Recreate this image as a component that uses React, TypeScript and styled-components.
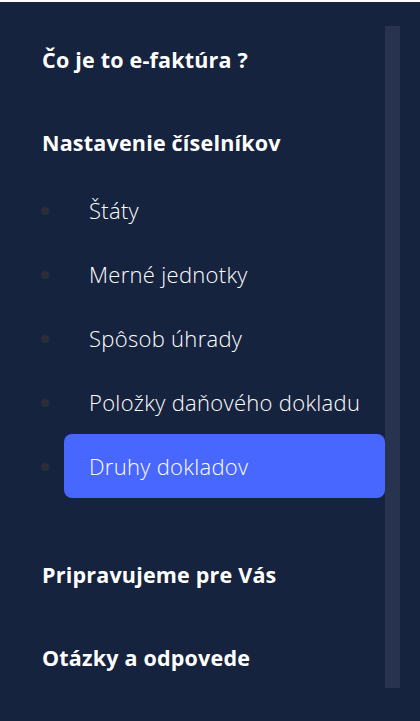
import React from "react";
import styled, { createGlobalStyle } from "styled-components";

const GlobalStyle = createGlobalStyle`
  html, body {
    margin: 0;
    padding: 0;
    background: #ffffff;
  }
  body {
    font-family: "Open Sans", "Noto Sans", sans-serif;
  }
`;

type NavItem = { label: string; active?: boolean };
type NavSection = { title: string; items?: NavItem[] };

const sections: NavSection[] = [
  { title: "Čo je to e-faktúra ?" },
  {
    title: "Nastavenie číselníkov",
    items: [
      { label: "Štáty" },
      { label: "Merné jednotky" },
      { label: "Spôsob úhrady" },
      { label: "Položky daňového dokladu" },
      { label: "Druhy dokladov", active: true },
    ],
  },
  { title: "Pripravujeme pre Vás" },
  { title: "Otázky a odpovede" },
];

export default function App() {
  return (
    <>
      <GlobalStyle />
      <SPage>
        <SSidebar>
          {sections.map((section) => (
            <SSection key={section.title}>
              <STitle>{section.title}</STitle>
              {section.items ? (
                <SList>
                  {section.items.map((item) => (
                    <SItem key={item.label} $active={item.active}>
                      {item.label}
                    </SItem>
                  ))}
                </SList>
              ) : null}
            </SSection>
          ))}
        </SSidebar>
      </SPage>
    </>
  );
}

const SPage = styled.div`
  margin-top: 2px;
  height: 719px;
  background: #16233f;
  padding: 24px 20px 0 0;
  box-sizing: border-box;
`;
// scrollbars are hidden in the headless browser, so the track is a border
const SSidebar = styled.nav`
  height: 662px;
  overflow: hidden;
  padding-left: 42px;
  border-right: 15px solid #28344f;
  box-sizing: border-box;
`;
const SSection = styled.section`
  padding: 20px 0 35px;
`;
const STitle = styled.h2`
  margin: 0;
  font-size: 21.5px;
  line-height: 28px;
  font-weight: 700;
  letter-spacing: 0.2px;
  color: #ffffff;
  white-space: nowrap;
`;
const SList = styled.ul`
  margin: 21px 0 8px;
  padding: 0 0 0 22px;
  list-style: disc;
`;
const SItem = styled.li<{ $active?: boolean }>`
  padding: 18px 25px;
  font-size: 22px;
  line-height: 28px;
  font-weight: 300;
  letter-spacing: 0.3px;
  color: #ffffff;
  white-space: nowrap;
  border-radius: 8px;
  background: ${(p) => (p.$active ? "#4767fe" : "transparent")};
  cursor: pointer;
  &::marker {
    color: #2b2e36;
  }
`;
